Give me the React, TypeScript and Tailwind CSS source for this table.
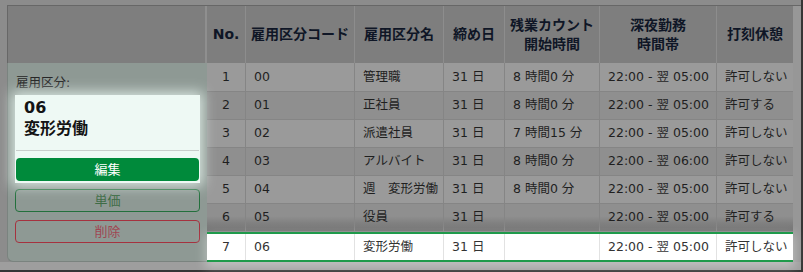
const cols = ['w-[38px] justify-center', 'w-[109px] pl-2', 'w-[89px] pl-2', 'w-[61px] pl-2', 'w-[95px] pl-2', 'w-[117px] pl-2', 'w-[77px] pl-2'];

const headers = ['No.', '雇用区分コード', '雇用区分名', '締め日', '残業カウント\n開始時間', '深夜勤務\n時間帯', '打刻休憩'];
const headerWidths = ['w-[38px]', 'w-[109px]', 'w-[89px]', 'w-[61px]', 'w-[95px]', 'w-[117px]', 'w-[77px]'];

const rows = [
  { cells: ['1', '00', '管理職', '31 日', '8 時間0 分', '22:00 - 翌 05:00', '許可しない'], bg: 'bg-[#9a9a9a]' },
  { cells: ['2', '01', '正社員', '31 日', '8 時間0 分', '22:00 - 翌 05:00', '許可する'], bg: 'bg-[#8f8f8f]' },
  { cells: ['3', '02', '派遣社員', '31 日', '7 時間15 分', '22:00 - 翌 05:00', '許可しない'], bg: 'bg-[#9a9a9a]' },
  { cells: ['4', '03', 'アルバイト', '31 日', '8 時間0 分', '22:00 - 翌 06:00', '許可しない'], bg: 'bg-[#8f8f8f]' },
  { cells: ['5', '04', '週　変形労働', '31 日', '8 時間0 分', '22:00 - 翌 05:00', '許可しない'], bg: 'bg-[#9a9a9a]' },
  { cells: ['6', '05', '役員', '31 日', '', '22:00 - 翌 05:00', '許可する'], bg: 'bg-[linear-gradient(to_bottom,#8f8f8f_45%,#707070)]' },
];

const selected = ['7', '06', '変形労働', '31 日', '', '22:00 - 翌 05:00', '許可しない'];

export default function App() {
  return (
    <div className="w-[803px] h-[272px] bg-[#8c8c8c] border-r-2 border-b-2 border-[#353535] pl-[7px] pt-[5px] font-['DejaVu_Sans','Noto_Sans_CJK_JP',sans-serif] text-[12.5px]">
      <div className="flex h-[257px] border-t border-[#676767]">
        <SidePanel />
        <EmploymentTable />
        <div className="w-[8px] bg-[#979797]" />
      </div>
      <div className="h-[8px] bg-[#9e9e9e] -ml-[7px]" />
    </div>
  );
}

function SidePanel() {
  return (
    <div className="w-[200px] flex flex-col">
      <div className="h-[57px] flex-shrink-0 bg-[#7e7e7e] border-l border-r-2 border-l-[#676767] border-r-[#8f8f8f]" />
      <div className="flex-1 bg-[#8e9994] rounded-bl-md border-l border-b border-[#7a837f] px-[7px] pt-[10px]">
        <p className="px-[1px] leading-5 text-[#262626]">雇用区分:</p>

        {/* highlighted card */}
        <div className="relative mt-[2px] bg-[#eef9f4] px-[1px] pt-[2px] pb-[2px] shadow-[0_0_12px_3px_#d9e6e0]">
          <div className="px-2 text-[16px] font-bold leading-[21px] text-[#141414]">
            <p>06</p>
            <p>変形労働</p>
          </div>
          <div className="mt-[11px] border-t border-[#c8cecb]" />
          <button className="mt-[7px] w-full h-[23px] rounded bg-[#008a3b] text-white text-[13px] leading-none">
            編集
          </button>
        </div>

        <button className="mt-[6px] w-full h-[23px] rounded border border-[#23703c] text-[#3e6c46] text-[13px] leading-none">
          単価
        </button>
        <button className="mt-[8px] w-full h-[23px] rounded border border-[#a5323f] text-[#a04652] text-[13px] leading-none">
          削除
        </button>
      </div>
    </div>
  );
}

function EmploymentTable() {
  return (
    <div className="w-[586px] flex flex-col">
      <div className="h-[57px] flex-shrink-0 flex bg-[#7e7e7e]">
        {headers.map((h, i) => (
          <div
            key={h}
            className={`${headerWidths[i]} flex items-center justify-center text-center whitespace-pre-line font-bold text-[14px] leading-[19px] text-[#0f1626] ${i > 0 ? 'border-l border-[#8d8d8d]' : ''}`}
          >
            {h}
          </div>
        ))}
      </div>

      {rows.map((r, ri) => (
        <div key={ri} className={`flex ${ri === 0 ? 'h-[29px]' : 'h-[28px]'} border-b border-[#858585] ${r.bg} text-[#1f1f1f]`}>
          {r.cells.map((c, i) => (
            <div key={i} className={`${cols[i]} flex items-center whitespace-pre ${i > 0 ? 'border-l border-[#858585]' : ''}`}>
              {c}
            </div>
          ))}
        </div>
      ))}

      {/* highlighted row */}
      <div className="relative z-10 flex h-[30px] border-y-2 border-[#1f9a4b] bg-white text-[#333] shadow-[0_4px_10px_2px_rgba(255,255,255,0.35)]">
        {selected.map((c, i) => (
          <div key={i} className={`${cols[i]} flex items-center whitespace-pre ${i > 0 ? 'border-l border-[#e2e2e2]' : ''}`}>
            {c}
          </div>
        ))}
      </div>
    </div>
  );
}
